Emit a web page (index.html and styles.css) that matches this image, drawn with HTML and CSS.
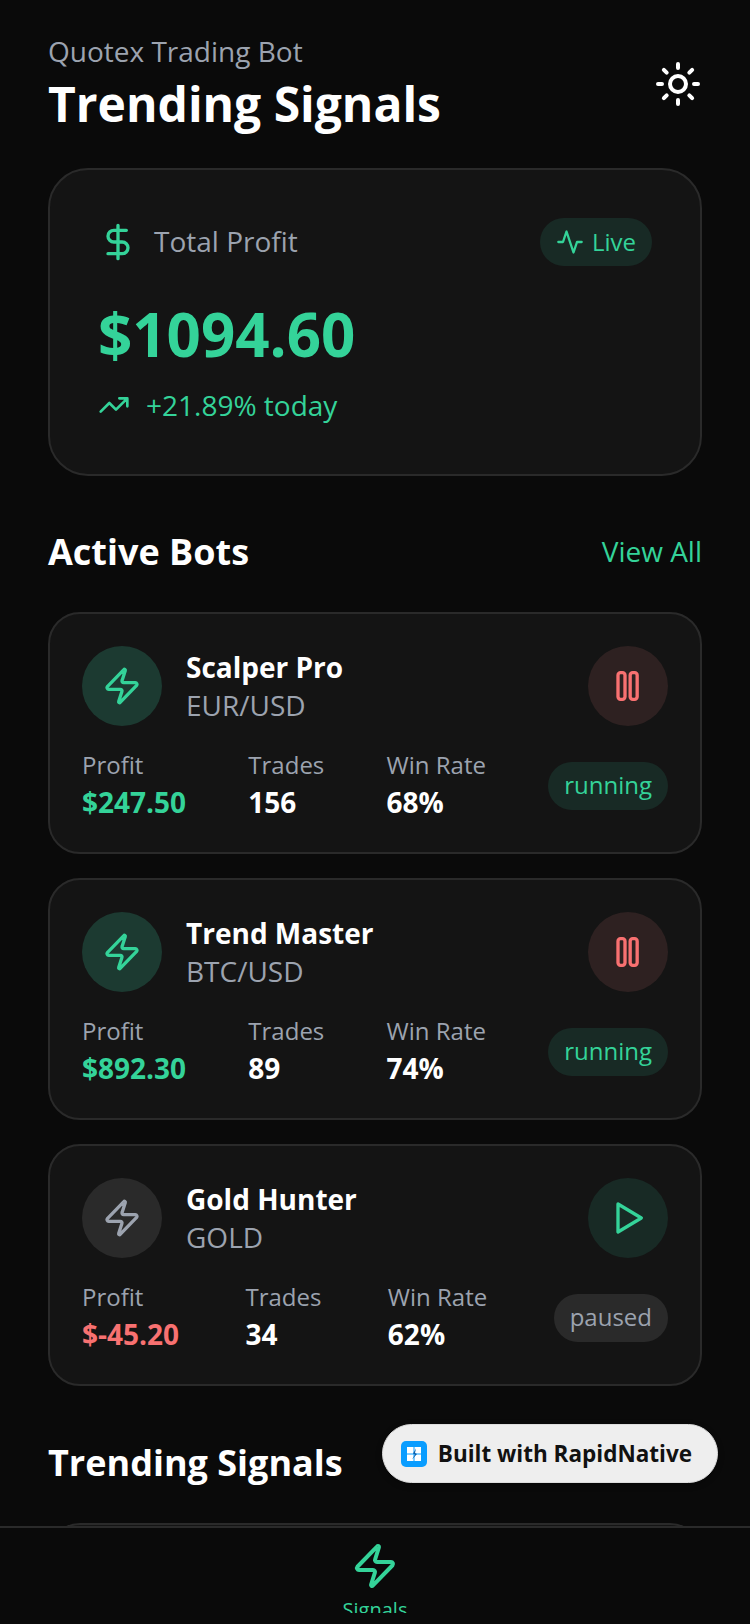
FILE: index.html
```html
<!DOCTYPE html>
<html lang="en">
<head>
    <meta charset="UTF-8">
    <meta name="viewport" content="width=device-width, initial-scale=1.0">
    <title>Trending Signals</title>
    <link rel="stylesheet" href="styles.css">
</head>
<body>
    <svg class="icon-defs" width="0" height="0" aria-hidden="true">
        <symbol id="zap" viewBox="0 0 24 24">
            <path d="M4 14a1 1 0 0 1-.78-1.63l9.9-10.2a.5.5 0 0 1 .86.46l-1.92 6.02A1 1 0 0 0 13 10h7a1 1 0 0 1 .78 1.63l-9.9 10.2a.5.5 0 0 1-.86-.46l1.92-6.02A1 1 0 0 0 11 14z"/>
        </symbol>
        <symbol id="pause" viewBox="0 0 24 24">
            <rect x="6" y="4" width="4.2" height="16" rx="1.5"/>
            <rect x="13.3" y="4" width="4.2" height="16" rx="1.5"/>
        </symbol>
        <symbol id="play" viewBox="0 0 24 24">
            <polygon points="6 3.6 20 12 6 20.4 6 3.6"/>
        </symbol>
    </svg>

    <div class="app">
        <div class="scroll">
            <header class="top">
                <div>
                    <p class="top-sub">Quotex Trading Bot</p>
                    <h1 class="top-title">Trending Signals</h1>
                </div>
                <svg class="icon icon-sun" viewBox="0 0 24 24">
                    <circle cx="12" cy="12" r="4"/>
                    <path d="M12 2v2M12 20v2M4.93 4.93l1.41 1.41M17.66 17.66l1.41 1.41M2 12h2M20 12h2M6.34 17.66l-1.41 1.41M19.07 4.93l-1.41 1.41"/>
                </svg>
            </header>

            <section class="hero">
                <div class="hero-head">
                    <div class="hero-label">
                        <svg class="icon icon-40 green" viewBox="0 0 24 24">
                            <path d="M12 2v20M17 5H9.5a3.5 3.5 0 0 0 0 7h5a3.5 3.5 0 0 1 0 7H6"/>
                        </svg>
                        <span>Total Profit</span>
                    </div>
                    <div class="live">
                        <svg class="icon icon-28 green" viewBox="0 0 24 24">
                            <path d="M22 12h-4l-3 9L9 3l-3 9H2"/>
                        </svg>
                        <span>Live</span>
                    </div>
                </div>
                <div class="hero-amount">$1094.60</div>
                <div class="hero-change">
                    <svg class="icon icon-32 green" viewBox="0 0 24 24">
                        <path d="M22 7l-8.5 8.5-5-5L2 17M16 7h6v6"/>
                    </svg>
                    <span>+21.89% today</span>
                </div>
            </section>

            <div class="section-head section-bots">
                <h2>Active Bots</h2>
                <span class="view-all">View All</span>
            </div>

            <div class="bots">
                <article class="bot">
                    <div class="bot-top">
                        <div class="circle circle-green"><svg class="icon icon-40 green"><use href="#zap"/></svg></div>
                        <div class="bot-name">
                            <h3>Scalper Pro</h3>
                            <p>EUR/USD</p>
                        </div>
                        <div class="circle circle-red"><svg class="icon icon-40 red"><use href="#pause"/></svg></div>
                    </div>
                    <div class="bot-stats">
                        <div class="stat"><span>Profit</span><b class="green-text">$247.50</b></div>
                        <div class="stat"><span>Trades</span><b>156</b></div>
                        <div class="stat"><span>Win Rate</span><b>68%</b></div>
                        <div class="status status-run">running</div>
                    </div>
                </article>

                <article class="bot">
                    <div class="bot-top">
                        <div class="circle circle-green"><svg class="icon icon-40 green"><use href="#zap"/></svg></div>
                        <div class="bot-name">
                            <h3>Trend Master</h3>
                            <p>BTC/USD</p>
                        </div>
                        <div class="circle circle-red"><svg class="icon icon-40 red"><use href="#pause"/></svg></div>
                    </div>
                    <div class="bot-stats">
                        <div class="stat"><span>Profit</span><b class="green-text">$892.30</b></div>
                        <div class="stat"><span>Trades</span><b>89</b></div>
                        <div class="stat"><span>Win Rate</span><b>74%</b></div>
                        <div class="status status-run">running</div>
                    </div>
                </article>

                <article class="bot">
                    <div class="bot-top">
                        <div class="circle circle-gray"><svg class="icon icon-40 gray"><use href="#zap"/></svg></div>
                        <div class="bot-name">
                            <h3>Gold Hunter</h3>
                            <p>GOLD</p>
                        </div>
                        <div class="circle circle-play"><svg class="icon icon-40 green"><use href="#play"/></svg></div>
                    </div>
                    <div class="bot-stats">
                        <div class="stat"><span>Profit</span><b class="red-text">$-45.20</b></div>
                        <div class="stat"><span>Trades</span><b>34</b></div>
                        <div class="stat"><span>Win Rate</span><b>62%</b></div>
                        <div class="status status-pause">paused</div>
                    </div>
                </article>
            </div>

            <div class="section-head section-signals">
                <h2>Trending Signals</h2>
            </div>
            <div class="signal-card"></div>
        </div>

        <nav class="tabbar">
            <div class="tab">
                <svg class="icon icon-48 green"><use href="#zap"/></svg>
                <span>Signals</span>
            </div>
        </nav>

        <div class="built">
            <svg class="built-logo" viewBox="0 0 26 26">
                <rect width="26" height="26" rx="5" fill="#0a9dff"/>
                <rect x="6" y="6" width="6.5" height="6.5" fill="#fff"/>
                <rect x="13.5" y="6" width="6.5" height="6.5" fill="#fff"/>
                <rect x="6" y="13.5" width="6.5" height="6.5" fill="#fff"/>
                <rect x="13.5" y="13.5" width="6.5" height="6.5" fill="#fff"/>
                <path d="M15 7.5l-3 5 2 1-3 5 5-5.5-2-1z" fill="#0a5ea8"/>
            </svg>
            <span>Built with RapidNative</span>
        </div>
    </div>
</body>
</html>
```

FILE: styles.css
```css
* {
    box-sizing: border-box;
}

body {
    margin: 0;
    background-color: #0a0a0a;
    font-family: "Open Sans", "Noto Sans", sans-serif;
    color: #ffffff;
}

h1, h2, h3, p {
    margin: 0;
}

.icon-defs {
    position: absolute;
}

.app {
    position: relative;
    display: flex;
    flex-direction: column;
    width: 750px;
    height: 1624px;
    overflow: hidden;
}

.scroll {
    flex: 1;
    min-height: 0;
    overflow: hidden;
    padding: 32px 48px 0;
}

/* icons */
.icon {
    display: block;
    flex-shrink: 0;
    fill: none;
    stroke: currentColor;
    stroke-width: 2;
    stroke-linecap: round;
    stroke-linejoin: round;
}
.icon-28 { width: 28px; height: 28px; }
.icon-32 { width: 32px; height: 32px; }
.icon-40 { width: 40px; height: 40px; }
.icon-48 { width: 48px; height: 48px; }
.icon-sun { width: 48px; height: 48px; color: #ffffff; }
.green { color: #34d399; }
.red { color: #f87171; }
.gray { color: #9ca3af; }

/* header */
.top {
    display: flex;
    justify-content: space-between;
    align-items: center;
    margin-bottom: 32px;
}
.top-sub {
    font-size: 28px;
    line-height: 38px;
    color: #9ca3af;
}
.top-title {
    margin-top: 1px;
    font-size: 48px;
    line-height: 65px;
    font-weight: 700;
}

/* total profit */
.hero {
    height: 308px;
    padding: 48px;
    background-color: #141414;
    border: 2px solid #2a2a2a;
    border-radius: 40px;
}
.hero-head {
    display: flex;
    justify-content: space-between;
    align-items: center;
}
.hero-label {
    display: flex;
    align-items: center;
    gap: 16px;
    font-size: 28px;
    color: #9ca3af;
}
.hero-label span, .live span {
    margin-bottom: 2px;
}
.live {
    display: flex;
    align-items: center;
    gap: 8px;
    height: 48px;
    padding: 0 16px;
    border-radius: 24px;
    background-color: #182a25;
    color: #34d399;
    font-size: 24px;
}
.hero-amount {
    margin-top: 27px;
    font-size: 60px;
    line-height: 82px;
    font-weight: 700;
    color: #34d399;
}
.hero-change {
    display: flex;
    align-items: center;
    gap: 16px;
    margin-top: 11px;
    font-size: 28px;
    line-height: 38px;
    color: #34d399;
}

/* sections */
.section-head {
    display: flex;
    justify-content: space-between;
    align-items: center;
}
.section-head h2 {
    font-size: 36px;
    line-height: 49px;
    font-weight: 700;
}
.section-bots {
    margin-top: 51px;
    margin-bottom: 36px;
}
.section-signals {
    margin-top: 52px;
    margin-bottom: 36px;
}
.view-all {
    margin-bottom: 2px;
    font-size: 28px;
    color: #34d399;
}

/* bots */
.bots {
    display: flex;
    flex-direction: column;
    gap: 24px;
}
.bot {
    height: 242px;
    padding: 32px;
    background-color: #141414;
    border: 2px solid #2a2a2a;
    border-radius: 32px;
}
.bot-top {
    display: flex;
    align-items: center;
    gap: 24px;
}
.bot-name {
    flex: 1;
}
.bot-name h3 {
    font-size: 28px;
    line-height: 38px;
    font-weight: 700;
}
.bot-name p {
    font-size: 28px;
    line-height: 38px;
    color: #9ca3af;
}
.circle {
    display: flex;
    justify-content: center;
    align-items: center;
    width: 80px;
    height: 80px;
    border-radius: 50%;
}
.circle-green { background-color: #1c3a31; }
.circle-red { background-color: #2e2121; }
.circle-gray { background-color: #2a2a2a; }
.circle-play { background-color: #182a25; }

.bot-stats {
    display: flex;
    justify-content: space-between;
    align-items: center;
    margin-top: 22px;
}
.stat span {
    display: block;
    margin-bottom: 2px;
    font-size: 24px;
    line-height: 33px;
    color: #9ca3af;
}
.stat b {
    display: block;
    font-size: 28px;
    line-height: 38px;
    font-weight: 700;
}
.green-text { color: #34d399; }
.red-text { color: #f87171; }

.status {
    height: 48px;
    margin-top: 2px;
    padding: 0 16px;
    border-radius: 24px;
    font-size: 24px;
    line-height: 46px;
}
.status-run {
    background-color: #182a25;
    color: #34d399;
}
.status-pause {
    background-color: #2a2a2a;
    color: #9ca3af;
}

.signal-card {
    height: 240px;
    background-color: #141414;
    border: 2px solid #2a2a2a;
    border-radius: 32px;
}

/* bottom tabs */
.tabbar {
    flex-shrink: 0;
    height: 98px;
    background-color: #0a0a0a;
    border-top: 2px solid #2a2a2a;
}
.tab {
    display: flex;
    flex-direction: column;
    align-items: center;
    height: 85px;
    padding-top: 14px;
    overflow: hidden;
    color: #34d399;
}
.tab span {
    margin-top: 5px;
    font-size: 20px;
    line-height: 30px;
}

/* floating badge */
.built {
    position: absolute;
    right: 32px;
    bottom: 141px;
    display: flex;
    align-items: center;
    gap: 11px;
    height: 59px;
    padding: 0 25px 0 18px;
    border-radius: 30px;
    background-color: #eeeeee;
    border: 1px solid #dddddd;
    box-shadow: 0 2px 6px rgba(0, 0, 0, 0.3);
    color: #111111;
    font-size: 22.5px;
    font-weight: 700;
}
.built-logo {
    display: block;
    width: 26px;
    height: 26px;
}
```
